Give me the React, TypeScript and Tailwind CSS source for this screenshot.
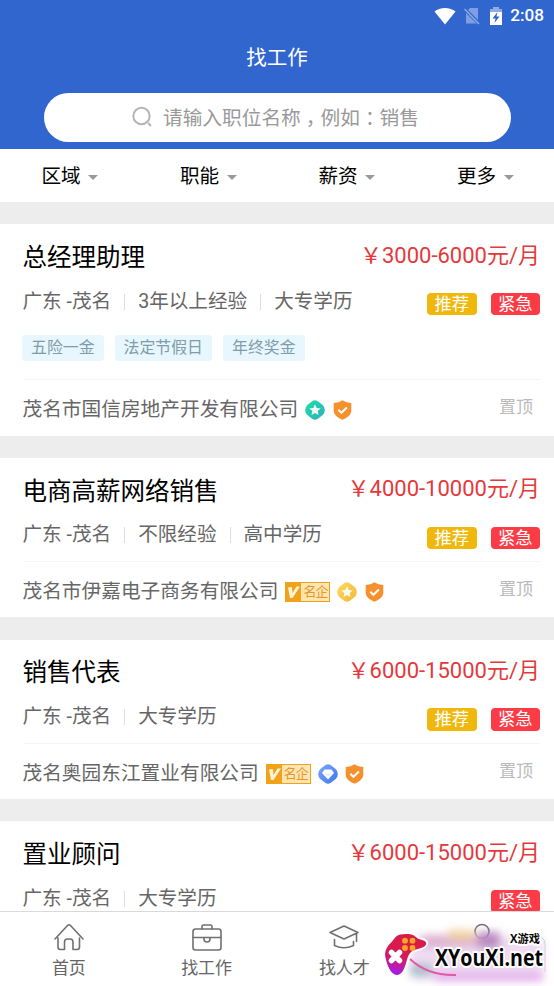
import type { ReactNode } from "react";

type Medal = "star" | "gold" | "diamond";

interface Job {
  title: string;
  salary: string;
  meta: string[];
  tags?: string[];
  recommended?: boolean;
  company?: string;
  famous?: boolean;
  medal?: Medal;
}

const jobs: Job[] = [
  {
    title: "总经理助理",
    salary: "3000-6000",
    meta: ["广东 -茂名", "3年以上经验", "大专学历"],
    tags: ["五险一金", "法定节假日", "年终奖金"],
    recommended: true,
    company: "茂名市国信房地产开发有限公司",
    medal: "star",
  },
  {
    title: "电商高薪网络销售",
    salary: "4000-10000",
    meta: ["广东 -茂名", "不限经验", "高中学历"],
    recommended: true,
    company: "茂名市伊嘉电子商务有限公司",
    famous: true,
    medal: "gold",
  },
  {
    title: "销售代表",
    salary: "6000-15000",
    meta: ["广东 -茂名", "大专学历"],
    recommended: true,
    company: "茂名奥园东江置业有限公司",
    famous: true,
    medal: "diamond",
  },
  {
    title: "置业顾问",
    salary: "6000-15000",
    meta: ["广东 -茂名", "大专学历"],
  },
];

const filters = ["区域", "职能", "薪资", "更多"];

function StatusBar() {
  return (
    <div className="h-8 flex items-center justify-end pr-[10px] text-white">
      <svg className="mb-px" width="22" height="18" viewBox="0 0 22 18" fill="currentColor">
        <path d="M.5 4.500C6-.2 16-.2 21.500 4.500L11 17.500z" />
      </svg>
      <svg className="ml-[7px]" width="18" height="18" viewBox="0 0 18 18">
        <path d="M7 1h8v15.500H3V5z" fill="#7f9fe0" />
        <path d="M1 1.500l15 15" stroke="#3266cf" strokeWidth="3.500" />
        <path d="M1.500 2l14.500 15" stroke="#91abe3" strokeWidth="1.500" />
      </svg>
      <svg className="ml-[8px] mb-px" width="14" height="20" viewBox="0 0 14 20">
        <path d="M4 1h6v2h3v4H1V3h3z" fill="#91abe3" />
        <path d="M1 6h12v13H1z" fill="#fff" />
        <path d="M8.500 6L3.500 12.500h3L5.500 17l5-6.500h-3z" fill="#3266cf" />
      </svg>
      <span className="ml-[7.500px] text-[17.200px] leading-none font-medium">2:08</span>
    </div>
  );
}

function Header() {
  return (
    <header className="h-[149px] bg-[#3266cf]">
      <StatusBar />
      <h1 className="h-[52px] text-center text-[20.500px] leading-[52px] text-white">找工作</h1>
      <div className="ml-[44px] w-[467px] h-[49px] mt-[8.500px] rounded-full bg-white flex items-center pl-[87px] text-[#999]">
        <svg width="22" height="22" viewBox="0 0 22 22" fill="none" stroke="#b5b5b5" strokeWidth="2">
          <circle cx="10.500" cy="10" r="8.200" />
          <path d="M17 17l3 3" />
        </svg>
        <span className="ml-[10px] mt-[3px] text-[19.700px] leading-none whitespace-nowrap">
          请输入职位名称<span className="ml-[5px] -mr-[5px]">，</span>例如
          <span className="ml-[5px] -mr-[5px]">：</span>销售
        </span>
      </div>
    </header>
  );
}

function FilterBar() {
  return (
    <nav className="h-[53px] grid grid-cols-4 bg-white">
      {filters.map((name) => (
        <div key={name} className="flex items-center justify-center pl-px text-[19.600px] text-black pt-[2px]">
          {name}
          <svg className="ml-[7.500px] mt-px" width="10" height="5" viewBox="0 0 10 5" fill="#999">
            <path d="M0 0h10L5 5z" />
          </svg>
        </div>
      ))}
    </nav>
  );
}

function FamousBadge() {
  return (
    <span className="ml-[7px] w-[45px] h-5 flex bg-[#f0a31a] p-px">
      <svg width="15" height="18" viewBox="0 0 15 18" fill="#fff3d5">
        <path d="M2 4.500l3.800-.5.700 6L10.500 3.500h3.500L6.500 15H4z" />
      </svg>
      <span className="flex-1 bg-[#ffe5b0] text-center text-[13px] leading-[18px] text-[#e5962a] tracking-[-1px]">
        名企
      </span>
    </span>
  );
}

const medalColors: Record<Medal, [string, string]> = {
  star: ["#1ee0a0", "#2faec0"],
  gold: ["#ffd95c", "#eeb93c"],
  diamond: ["#7fa6f5", "#3b78ea"],
};

function MedalIcon({ kind }: { kind: Medal }) {
  const [from, to] = medalColors[kind];
  return (
    <svg className="ml-[7px]" width="20" height="20" viewBox="0 0 20 20">
      <defs>
        <linearGradient id={kind} x1="0" y1="0" x2="1" y2="1">
          <stop offset="0" stopColor={from} />
          <stop offset="1" stopColor={to} />
        </linearGradient>
      </defs>
      <path
        d="M7.500 1Q10-.5 12.500 1l5.200 4Q19.800 7 19.800 10t-2.100 5l-5.200 4Q10 20.500 7.500 19L2.300 15Q.2 13 .2 10t2.100-5z"
        fill={`url(#${kind})`}
      />
      {kind === "diamond" ? (
        <>
          <path d="M6.500 5.500h7L16 9l-6 6.500L4 9z" fill="#fff" />
          <path d="M7.500 9l2.500 2.500L12.500 9" fill="none" stroke="#c7d9fc" />
        </>
      ) : (
        <path
          d="M10 4.200l1.700 3.700 4 .5-3 2.700.8 4L10 13.100l-3.500 2 .8-4-3-2.700 4-.5z"
          fill="#fff"
          fillOpacity=".92"
        />
      )}
    </svg>
  );
}

function ShieldIcon() {
  return (
    <svg className="ml-[7.500px]" width="19" height="20" viewBox="0 0 19 20">
      <path
        d="M9.500.3Q13 2.800 18.300 3v7.500c0 4.500-4.600 7.700-8.800 9.300C5.300 18.200.7 15 .7 10.500V3Q6 2.800 9.500.3z"
        fill="#f5902c"
      />
      <path d="M5.300 9.800l3.100 3 5.500-5.300" fill="none" stroke="#fff" strokeWidth="2" />
    </svg>
  );
}

function JobCard({ job }: { job: Job }) {
  return (
    <article className="bg-white pt-[15px] pl-[22.500px] pr-[14px] mb-[22.200px] text-[#666]">
      <div className="h-9 flex items-center justify-between">
        <h2 className="text-[24.500px] leading-none text-black pt-[2px]">{job.title}</h2>
        <span className="text-[22px] leading-none text-[#e4393c] pb-[3px]">￥{job.salary}元/月</span>
      </div>
      <div className="h-[52px] pt-px flex items-center text-[19.600px] leading-none whitespace-nowrap">
        {job.meta.map((item, i) => (
          <span key={item} className="flex items-center">
            {i > 0 && <i className="mx-[13px] w-px h-4 bg-[#ddd]" />}
            {item}
          </span>
        ))}
        <div className="ml-auto flex gap-[14px] mt-[5px] text-[17.300px] leading-[23px] text-white text-center">
          {job.recommended && <span className="w-[49.500px] h-[22.500px] rounded bg-[#f0b70c]">推荐</span>}
          <span className="w-[49.500px] h-[22.500px] rounded bg-[#fb3c46]">紧急</span>
        </div>
      </div>
      {job.tags && (
        <div className="-ml-[0.500px] flex gap-[11px] mt-[8px] mb-[18px]">
          {job.tags.map((tag) => (
            <span
              key={tag}
              className="h-[26px] px-[9px] rounded-sm bg-[#e8f6fe] text-[15.900px] leading-[26px] text-[#7f9cab]"
            >
              {tag}
            </span>
          ))}
        </div>
      )}
      <div className="border-t border-[#f5f5f5] h-[56.600px] pt-[4px] flex items-center">
        {job.company && (
          <>
            <span className="text-[19.700px] leading-none">{job.company}</span>
            <div className="flex items-center mt-px">
              {job.famous && <FamousBadge />}
              {job.medal && <MedalIcon kind={job.medal} />}
              <ShieldIcon />
            </div>
            <span className="ml-auto mr-[7px] mb-[4px] text-[17px] leading-none text-[#bbb]">置顶</span>
          </>
        )}
      </div>
    </article>
  );
}

function TabIcon({ children }: { children: ReactNode }) {
  return (
    <svg
      width="32"
      height="30"
      viewBox="0 0 32 30"
      fill="none"
      stroke="#707070"
      strokeWidth="1.600"
      strokeLinecap="round"
      strokeLinejoin="round"
    >
      {children}
    </svg>
  );
}

const tabs = [
  {
    label: "首页",
    icon: (
      <path d="M2 17L14.500 3.500Q16 2 17.500 3.500L30 17M5 16v9q0 2.500 2.500 2.500h4V20q0-3 3-3h2.500q3 0 3 3v7.500h4q2.500 0 2.500-2.500v-9" />
    ),
  },
  {
    label: "找工作",
    icon: (
      <>
        <rect x="2" y="7" width="28" height="21" rx="2.500" />
        <path d="M11 7V4.500q0-1.500 1.500-1.500h7Q21 3 21 4.500V7M2 15.500h28M13 15.500v1.500q0 3 3 3t3-3v-1.500" />
      </>
    ),
  },
  {
    label: "找人才",
    icon: <path d="M2 10.500L16 4l14 6.500L16 17zM6.500 17.500v6Q16 28 25.500 23.500v-4M28.500 11.500v8" />,
  },
  {
    label: "",
    icon: <circle cx="16" cy="9.500" r="7" />,
  },
];

function TabBar() {
  return (
    <nav className="absolute bottom-0 inset-x-0 h-[75px] pr-[3px] grid grid-cols-4 bg-white border-t border-[#d9d9d9]">
      {tabs.map((tab, i) => (
        <div key={i} className="flex flex-col items-center pt-[10px] text-[#666]">
          <TabIcon>{tab.icon}</TabIcon>
          {tab.label && <span className="mt-[8px] text-[17px] leading-none">{tab.label}</span>}
        </div>
      ))}
    </nav>
  );
}

function SiteMark() {
  return (
    <div className="absolute right-0 bottom-0 w-[174px] h-[68px]">
      <svg width="174" height="68" viewBox="0 0 174 68">
        <defs>
          <filter id="haze" x="-20%" y="-50%" width="140%" height="200%">
            <feGaussianBlur stdDeviation="4.500" />
          </filter>
          <linearGradient id="pad" x1=".6" y1="0" x2=".3" y2="1">
            <stop offset="0" stopColor="#d61c45" />
            <stop offset=".55" stopColor="#d81b55" />
            <stop offset="1" stopColor="#a51de8" />
          </linearGradient>
        </defs>
        <g filter="url(#haze)">
          <rect x="30" y="18" width="134" height="44" rx="8" fill="#efdcf3" />
          <rect x="42" y="17" width="76" height="12" fill="#dcaecf" />
          <rect x="68" y="12" width="26" height="10" fill="#f0d2a0" />
          <rect x="98" y="14" width="22" height="17" fill="#b98ac2" />
          <rect x="30" y="46" width="22" height="12" fill="#a9bdca" />
          <rect x="55" y="55" width="108" height="8" fill="#e0a8ea" />
        </g>
        <path d="M30 41Q48 58 76 57" fill="none" stroke="#e05aa5" strokeWidth="2" />
        <path d="M158 19q7 0 7 7v28" fill="none" stroke="#d5cfd8" />
        <path
          d="M17 18.500C20 16 27 15.500 32 16.500c4 1 5 4 9 5 5 1 6.500 3 5.500 5-1.500 3.500-8 4-12.500 6-4 2-5 5-6.500 10-2 7-4 14-9.500 14.500-6 .5-10-10-11.500-17-1.500-6 1-11 5-15 2-2 3.500-4.500 5.500-6.500z"
          transform="translate(-1 0) scale(1.010 1)"
          fill="url(#pad)"
          stroke="#fff"
          strokeWidth="4"
          paintOrder="stroke"
          strokeLinejoin="round"
        />
        <g fill="#ffa51f">
          <circle cx="25" cy="22.700" r="2.900" />
          <circle cx="32.500" cy="22.700" r="2.900" />
          <circle cx="25" cy="30" r="2.900" />
          <circle cx="32.500" cy="30" r="2.900" />
        </g>
        <path d="M11.500 34.500l8 8m0-8l-8 8" stroke="#fff" strokeWidth="5.500" strokeLinecap="round" />
        <g
          fill="#050505"
          stroke="#fff"
          strokeWidth="4"
          strokeLinejoin="round"
          paintOrder="stroke"
          fontWeight="700"
        >
          <text x="130" y="24.500" fontSize="11.500" textLength="30" lengthAdjust="spacingAndGlyphs" fontFamily="Open Sans, Noto Sans CJK SC, sans-serif">
            X游戏
          </text>
          <text x="55" y="48" fontSize="24" textLength="108" lengthAdjust="spacingAndGlyphs" fontFamily="Open Sans, sans-serif">
            XYouXi.net
          </text>
        </g>
      </svg>
    </div>
  );
}

export default function App() {
  return (
    <div
      lang="zh-CN"
      className="relative w-[554px] h-[986px] overflow-hidden bg-[#ededed] font-[Roboto,'Noto_Sans_CJK_SC',sans-serif]"
    >
      <Header />
      <FilterBar />
      <main className="pt-[22px]">
        {jobs.map((job) => (
          <JobCard key={job.title} job={job} />
        ))}
      </main>
      <TabBar />
      <SiteMark />
    </div>
  );
}
